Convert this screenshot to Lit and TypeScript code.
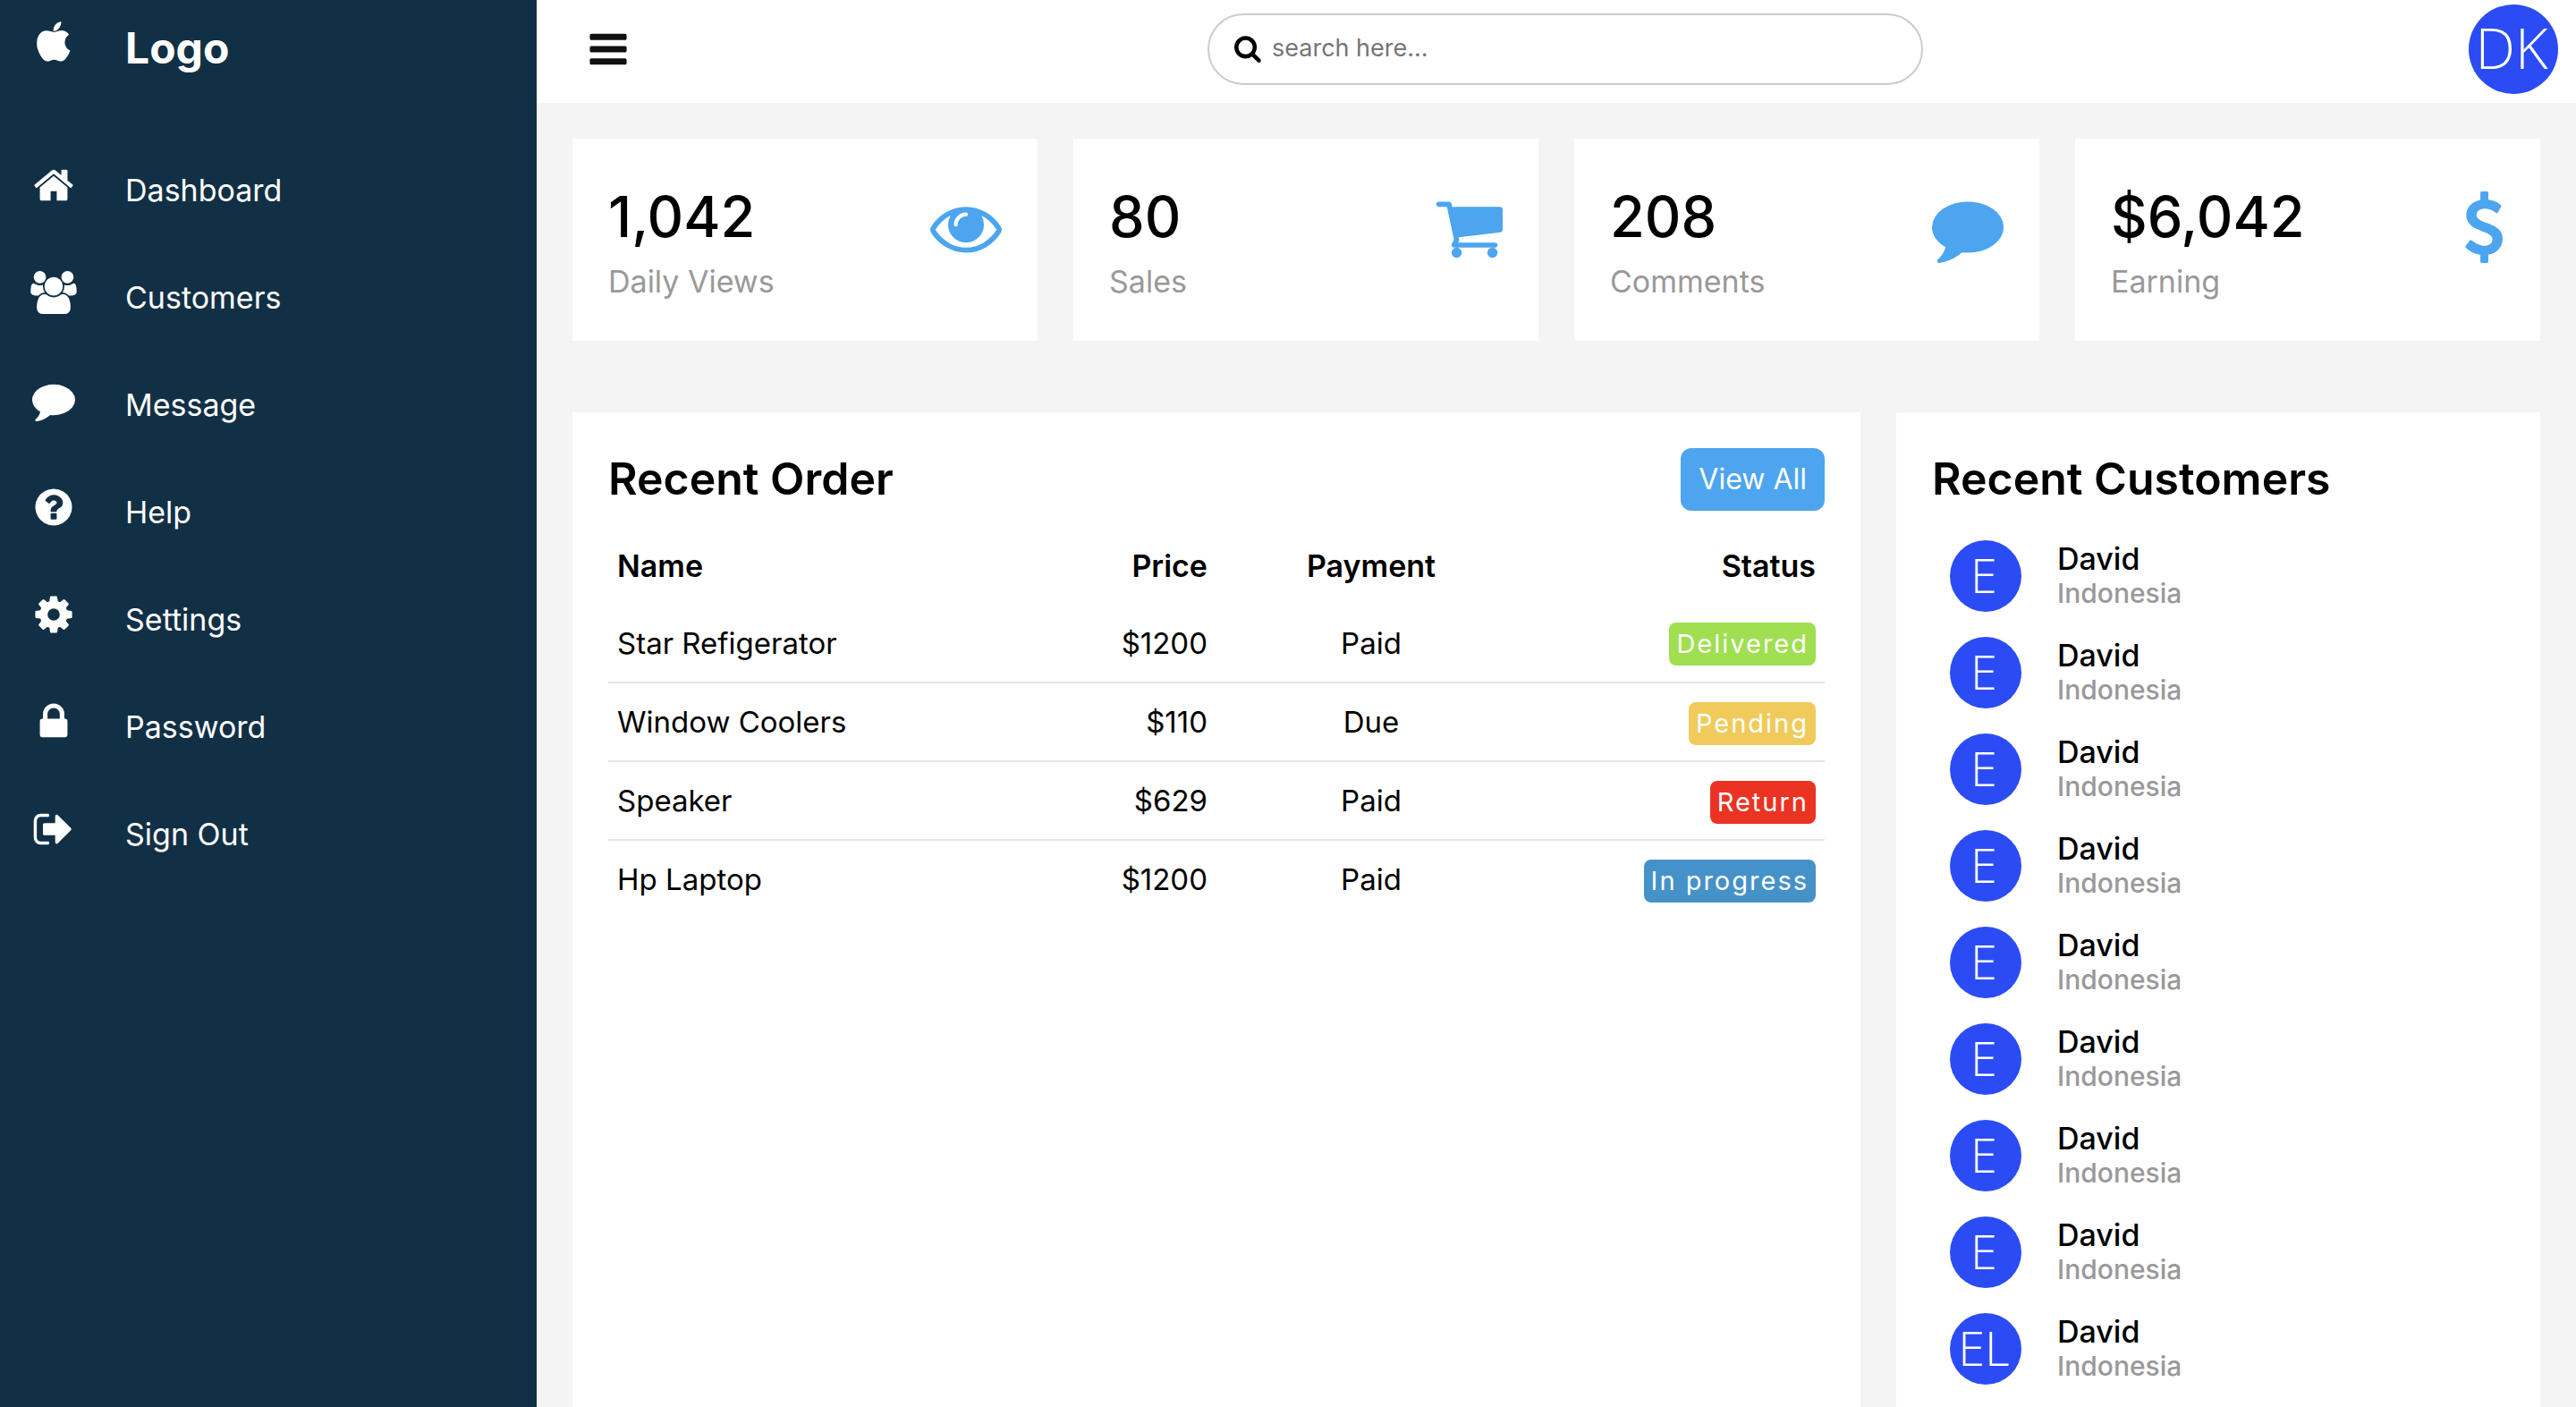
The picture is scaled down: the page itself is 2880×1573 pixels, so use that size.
import { LitElement, html, css } from "lit";
import { customElement, property } from "lit/decorators.js";

interface Glyph {
  box: string;
  d: string;
}

const GLYPHS: Record<string, Glyph> = {
  apple: {
    box: "0 0 1792 1792",
    d: "M1585 1215q-39 125-123 250-129 196-257 196-49 0-140-32-86-32-151-32-61 0-142 33-81 34-132 34-152 0-301-259-147-261-147-503 0-228 113-374 113-144 284-144 72 0 177 30 104 30 138 30 45 0 143-34 102-34 173-34 119 0 213 65 52 36 104 100-79 67-114 118-65 94-65 207 0 124 69 223t158 126zm-376-1173q0 61-29 136-30 75-93 138-54 54-108 72-37 11-104 17 3-149 78-257 74-107 250-148 1 3 2.5 11t2.5 11q0 4 .5 10t.5 10z",
  },
  home: {
    box: "0 0 1792 1792",
    d: "M1472 992v480q0 26-19 45t-45 19h-384v-384h-256v384h-384q-26 0-45-19t-19-45v-480q0-1 .5-3t.5-3l575-474 575 474q1 2 1 6zm223-69l-62 74q-8 9-21 11h-3q-13 0-21-7l-692-577-692 577q-12 8-24 7-13-2-21-11l-62-74q-8-10-7-23.5t11-21.5l719-599q32-26 76-26t76 26l244 204v-195q0-14 9-23t23-9h192q14 0 23 9t9 23v408l219 182q10 8 11 21.5t-7 23.5z",
  },
  users: {
    box: "0 0 1792 1792",
    d: "M529 896q-162 5-265 128h-134q-82 0-138-40.5t-56-118.5q0-353 124-353 6 0 43.5 21t97.5 42.5 119 21.5q67 0 133-23-5 37-5 66 0 139 81 256zm1071 637q0 120-73 189.5t-194 69.5h-874q-121 0-194-69.5t-73-189.5q0-53 3.5-103.5t14-109 26.5-108.5 43-97.5 62-81 85.5-53.5 111.5-20q10 0 43 21.5t73 48 107 48 135 21.5 135-21.5 107-48 73-48 43-21.5q61 0 111.5 20t85.5 53.5 62 81 43 97.5 26.5 108.5 14 109 3.5 103.5zm-1024-1277q0 106-75 181t-181 75-181-75-75-181 75-181 181-75 181 75 75 181zm704 384q0 159-112.5 271.5t-271.5 112.5-271.5-112.5-112.5-271.5 112.5-271.5 271.5-112.5 271.5 112.5 112.5 271.5zm576 225q0 78-56 118.5t-138 40.5h-134q-103-123-265-128 81-117 81-256 0-29-5-66 66 23 133 23 59 0 119-21.5t97.5-42.5 43.5-21q124 0 124 353zm-128-609q0 106-75 181t-181 75-181-75-75-181 75-181 181-75 181 75 75 181z",
  },
  comment: {
    box: "0 0 1792 1792",
    d: "M1792 896q0 174-120 321.5t-326 233-450 85.5q-70 0-145-8-198 175-460 242-49 14-114 22-17 2-30.5-9t-17.5-29v-1q-3-4-.5-12t2-10 4.5-9.5l6-9 7-8.5 8-9q7-8 31-34.5t34.5-38 31-39.5 32.5-51 27-59 26-76q-157-89-247.5-220t-90.5-281q0-130 71-248.5t191-204.5 286-136.5 348-50.5q244 0 450 85.5t326 233 120 321.5z",
  },
  help: {
    box: "0 0 1792 1792",
    d: "M1024 1376v-192q0-14-9-23t-23-9h-192q-14 0-23 9t-9 23v192q0 14 9 23t23 9h192q14 0 23-9t9-23zm256-672q0-88-55.5-163t-138.5-116-170-41q-243 0-371 213-15 24 8 42l132 100q7 6 19 6 16 0 25-12 53-68 86-92 34-24 86-24 48 0 85.5 26t37.5 59q0 38-20 61t-68 45q-63 28-115.5 86.5t-52.5 125.5v36q0 14 9 23t23 9h192q14 0 23-9t9-23q0-19 21.5-49.5t54.5-49.5q32-18 49-28.5t46-35 44.5-48 28-60.5 12.5-81zm384 192q0 209-103 385.5t-279.5 279.5-385.5 103-385.5-103-279.5-279.5-103-385.5 103-385.5 279.5-279.5 385.5-103 385.5 103 279.5 279.5 103 385.5z",
  },
  cog: {
    box: "0 0 1792 1792",
    d: "M1152 896q0-106-75-181t-181-75-181 75-75 181 75 181 181 75 181-75 75-181zm512-109v222q0 12-8 23t-20 13l-185 28q-19 54-39 91 35 50 107 138 10 12 10 25t-9 23q-27 37-99 108t-94 71q-12 0-26-9l-138-108q-44 23-91 38-16 136-29 186-7 28-36 28h-222q-14 0-24.5-8.5t-11.5-21.5l-28-184q-49-16-90-37l-141 107q-10 9-25 9-14 0-25-11-126-114-165-168-7-10-7-23 0-12 8-23 15-21 51-66.5t54-70.5q-27-50-41-99l-183-27q-13-2-21-12.5t-8-23.5v-222q0-12 8-23t19-13l186-28q14-46 39-92-40-57-107-138-10-12-10-24 0-10 9-23 26-36 98.5-107.5t94.5-71.5q13 0 26 10l138 107q44-23 91-38 16-136 29-186 7-28 36-28h222q14 0 24.5 8.5t11.5 21.5l28 184q49 16 90 37l142-107q9-9 24-9 13 0 25 10 129 119 165 170 7 8 7 22 0 12-8 23-15 21-51 66.5t-54 70.5q26 50 41 98l183 28q13 2 21 12.5t8 23.5z",
  },
  lock: {
    box: "0 0 1792 1792",
    d: "M640 768h512v-192q0-106-75-181t-181-75-181 75-75 181v192zm832 96v576q0 40-28 68t-68 28h-960q-40 0-68-28t-28-68v-576q0-40 28-68t68-28h32v-192q0-184 132-316t316-132 316 132 132 316v192h32q40 0 68 28t28 68z",
  },
  signout: {
    box: "0 0 1792 1792",
    d: "M704 1440q0 4 1 20t.5 26.5-3 23.5-10 19.5-20.5 6.5h-320q-119 0-203.5-84.5t-84.5-203.5v-704q0-119 84.5-203.5t203.5-84.5h320q13 0 22.5 9.5t9.5 22.5q0 4 1 20t.5 26.5-3 23.5-10 19.5-20.5 6.5h-320q-66 0-113 47t-47 113v704q0 66 47 113t113 47h312l11.5 1 11.5 3 8 5.5 7 9 2 13.5zm928-544q0 26-19 45l-544 544q-19 19-45 19t-45-19-19-45v-288h-448q-26 0-45-19t-19-45v-384q0-26 19-45t45-19h448v-288q0-26 19-45t45-19 45 19l544 544q19 19 19 45z",
  },
  bars: {
    box: "0 0 1792 1792",
    d: "M1664 1344v128q0 26-19 45t-45 19h-1408q-26 0-45-19t-19-45v-128q0-26 19-45t45-19h1408q26 0 45 19t19 45zm0-512v128q0 26-19 45t-45 19h-1408q-26 0-45-19t-19-45v-128q0-26 19-45t45-19h1408q26 0 45 19t19 45zm0-512v128q0 26-19 45t-45 19h-1408q-26 0-45-19t-19-45v-128q0-26 19-45t45-19h1408q26 0 45 19t19 45z",
  },
  search: {
    box: "64 0 1792 1792",
    d: "M1216 832q0-185-131.5-316.5t-316.5-131.5-316.5 131.5-131.5 316.5 131.5 316.5 316.5 131.5 316.5-131.5 131.5-316.5zm512 832q0 52-38 90t-90 38q-54 0-90-38l-343-342q-179 124-399 124-143 0-273.5-55.5t-225-150-150-225-55.5-273.5 55.5-273.5 150-225 225-150 273.5-55.5 273.5 55.5 225 150 150 225 55.5 273.5q0 220-124 399l343 343q37 37 37 90z",
  },
  eye: {
    box: "0 0 1792 1792",
    d: "M1664 960q-152-236-381-353 61 104 61 225 0 185-131.5 316.5t-316.5 131.5-316.5-131.5-131.5-316.5q0-121 61-225-229 117-381 353 133 205 333.5 326.5t434.5 121.5 434.5-121.5 333.5-326.5zm-720-384q0-20-14-34t-34-14q-125 0-214.5 89.5t-89.5 214.5q0 20 14 34t34 14 34-14 14-34q0-86 61-147t147-61q20 0 34-14t14-34zm848 384q0 34-20 69-140 230-376.5 368.5t-499.5 138.5-499.5-139-376.5-368q-20-35-20-69t20-69q140-229 376.5-368t499.5-139 499.5 139 376.5 368q20 35 20 69z",
  },
  cart: {
    box: "-64 0 1792 1792",
    d: "M704 1536q0 52-38 90t-90 38-90-38-38-90 38-90 90-38 90 38 38 90zm896 0q0 52-38 90t-90 38-90-38-38-90 38-90 90-38 90 38 38 90zm128-1088v512q0 24-16.5 42.5t-40.5 21.5l-1044 122q13 60 13 70 0 16-24 64h920q26 0 45 19t19 45-19 45-45 19h-1024q-26 0-45-19t-19-45q0-11 8-31.5t16-36 21.5-40 15.5-29.5l-177-823h-204q-26 0-45-19t-19-45 19-45 45-19h256q16 0 28.5 6.5t19.5 15.5 13 24.5 8 26 5.5 29.5 4.5 26h1201q26 0 45 19t19 45z",
  },
  dollar: {
    box: "-384 0 1792 1792",
    d: "M1362 1185q0 153-99.5 263.5t-258.5 136.5v175q0 14-9 23t-23 9h-135q-13 0-22.5-9.5t-9.5-22.5v-175q-66-9-127.5-31t-101.5-44.5-74-48-46.5-37.5-17.5-18q-17-21-2-41l103-135q7-10 23-12 15-2 24 9l2 2q113 99 243 125 37 8 74 8 81 0 142.5-43t61.5-122q0-28-15-53t-33.5-42-58.5-37.5-66-32-80-32.5q-39-16-61.5-25t-61.5-26.5-62.5-31-56.5-35.5-53.5-42.5-43.5-49-35.5-58-21-66.5-8.5-78q0-138 98-242t255-134v-180q0-13 9.5-22.5t22.5-9.5h135q14 0 23 9t9 23v176q57 6 110.5 23t87 33.5 63.5 37.5 39 29 15 14q17 18 5 38l-81 146q-8 15-23 16-14 3-27-7-3-3-14.5-12t-39-26.5-58.5-32-74.5-26-85.5-11.5q-95 0-155 43t-60 111q0 26 8.5 48t29.5 41.5 39.5 33 56 31 60.5 27 70 27.5q53 20 81 31.5t76 35 75.5 42.5 62 50 53 63.5 31.5 76.5 13 94z",
  },
};

@customElement("app-icon")
class AppIcon extends LitElement {
  @property() name = "";

  static styles = css`
    :host {
      display: block;
      flex: none;
      width: 48px;
      height: 48px;
    }
    .glyph {
      display: block;
      width: 100%;
      height: 100%;
      fill: currentColor;
      overflow: visible;
    }
  `;

  render() {
    const glyph = GLYPHS[this.name];
    return html`<svg class="glyph" viewBox=${glyph.box} aria-hidden="true"><path d=${glyph.d}></path></svg>`;
  }
}

const NAV = [
  { icon: "home", label: "Dashboard" },
  { icon: "users", label: "Customers" },
  { icon: "comment", label: "Message" },
  { icon: "help", label: "Help" },
  { icon: "cog", label: "Settings" },
  { icon: "lock", label: "Password" },
  { icon: "signout", label: "Sign Out" },
];

const STATS = [
  { value: "1,042", label: "Daily Views", icon: "eye" },
  { value: "80", label: "Sales", icon: "cart" },
  { value: "208", label: "Comments", icon: "comment" },
  { value: "$6,042", label: "Earning", icon: "dollar" },
];

const ORDERS = [
  { name: "Star Refigerator", price: "$1200", payment: "Paid", status: "Delivered", tone: "delivered" },
  { name: "Window Coolers", price: "$110", payment: "Due", status: "Pending", tone: "pending" },
  { name: "Speaker", price: "$629", payment: "Paid", status: "Return", tone: "return" },
  { name: "Hp Laptop", price: "$1200", payment: "Paid", status: "In progress", tone: "progress" },
];

const CUSTOMERS = ["E", "E", "E", "E", "E", "E", "E", "E", "EL"].map((initials) => ({
  initials,
  name: "David",
  country: "Indonesia",
}));

@customElement("app-root")
class AppRoot extends LitElement {
  static styles = css`
    :host {
      display: flex;
      height: 100vh;
      overflow: hidden;
      background: #f4f4f4;
      color: #000;
      font-family: Inter, "Open Sans", sans-serif;
      font-size: 32px;
    }
    * {
      box-sizing: border-box;
      margin: 0;
      padding: 0;
    }

    .sidebar {
      flex: none;
      width: 600px;
      background: #123045;
    }
    .nav {
      list-style: none;
    }
    .link {
      display: grid;
      grid-template-columns: 120px 1fr;
      column-gap: 20px;
      justify-items: center;
      height: 120px;
      color: #fff;
      font-size: 34px;
      line-height: 120px;
      text-decoration: none;
    }
    .link app-icon {
      margin-top: 30px;
    }
    .link-text {
      justify-self: start;
    }
    .brand {
      height: 110px;
      margin-bottom: 43px;
      font-size: 48px;
      font-weight: 700;
      line-height: 108px;
    }
    .brand app-icon {
      margin-top: 24px;
    }

    .main {
      flex: 1;
      min-width: 0;
      display: flex;
      flex-direction: column;
    }
    .topbar {
      flex: none;
      display: flex;
      align-items: center;
      justify-content: space-between;
      padding: 5px 20px 10px;
      background: #fff;
    }
    .toggle {
      display: flex;
      align-items: center;
      justify-content: center;
      width: 120px;
      height: 100px;
      border: 0;
      background: none;
      color: #111;
    }
    .search {
      display: flex;
      align-items: center;
      gap: 10px;
      width: 800px;
      height: 80px;
      padding: 0 28px 2px;
      border: 2px solid #ccc;
      border-radius: 40px;
    }
    .search app-icon {
      width: 32px;
      height: 32px;
    }
    .search-input {
      flex: 1;
      min-width: 0;
      border: 0;
      outline: 0;
      background: none;
      font: inherit;
      font-size: 27px;
      line-height: 40px;
    }
    .search-input::placeholder {
      color: #757575;
    }

    .avatar {
      flex: none;
      display: flex;
      align-items: center;
      justify-content: center;
      width: 80px;
      height: 80px;
      padding: 0 4px 4px 0;
      border-radius: 50%;
      background: #2b4cf5;
      color: #fff;
      font-family: "Open Sans", "Noto Sans", sans-serif;
      font-size: 54px;
      font-weight: 300;
      line-height: 76px;
    }
    .avatar-user {
      width: 100px;
      height: 100px;
      font-size: 63px;
      line-height: 96px;
    }

    .stats {
      flex: none;
      display: grid;
      grid-template-columns: repeat(4, 1fr);
      gap: 40px;
      padding: 40px;
    }
    .stat {
      display: flex;
      justify-content: space-between;
      padding: 40px;
      background: #fff;
    }
    .stat-value {
      font-size: 63px;
      font-weight: 500;
      line-height: 94px;
    }
    .stat-label {
      color: #999;
      font-size: 34px;
      line-height: 52px;
    }
    .stat app-icon {
      width: 80px;
      height: 80px;
      margin-top: 19px;
      color: #4ca5ee;
    }

    .details {
      flex: 1;
      min-height: 0;
      display: grid;
      grid-template-columns: 2fr 1fr;
      gap: 40px;
      padding: 40px 40px 0;
    }
    .panel {
      min-width: 0;
      padding: 40px;
      background: #fff;
    }
    .panel-head {
      display: flex;
      align-items: center;
      justify-content: space-between;
      height: 70px;
      margin-bottom: 19px;
    }
    .panel-title {
      font-size: 50px;
      font-weight: 600;
      line-height: 70px;
      padding-bottom: 2px;
    }
    .view-all {
      padding: 0 20px;
      border-radius: 12px;
      background: #4ca5ee;
      color: #fff;
      font-size: 32px;
      line-height: 70px;
      text-decoration: none;
    }

    .orders {
      width: 100%;
      table-layout: fixed;
      border-collapse: collapse;
      line-height: 48px;
    }
    .orders th,
    .orders td {
      padding: 0 10px;
      font-size: 33px;
      vertical-align: middle;
    }
    .orders th {
      height: 85px;
      font-size: 34px;
      font-weight: 600;
    }
    .orders td {
      height: 88px;
      border-bottom: 2px solid #e5e5e5;
    }
    .orders tr:last-child td {
      border-bottom-color: transparent;
    }
    .orders .name {
      width: 28%;
      text-align: left;
    }
    .orders .price {
      width: 22%;
      text-align: right;
    }
    .orders .payment {
      width: 346px;
      text-align: center;
    }
    .orders .status {
      text-align: right;
    }
    .badge {
      display: inline-block;
      padding: 0 8px;
      border-radius: 8px;
      color: #fff;
      font-size: 29px;
      line-height: 48px;
      letter-spacing: 2px;
      vertical-align: middle;
    }
    .delivered {
      background: #9fdf50;
    }
    .pending {
      background: #f0cb5b;
    }
    .return {
      background: #ea3323;
    }
    .progress {
      background: #4592c9;
    }

    .customers {
      list-style: none;
    }
    .customer {
      display: flex;
      align-items: center;
      gap: 40px;
      height: 108px;
      padding-left: 20px;
      font-weight: 500;
      line-height: 38px;
    }
    .customer-name {
      font-size: 34px;
    }
    .customer-country {
      color: #999;
      font-size: 30px;
    }
  `;

  render() {
    return html`
      <nav class="sidebar">
        <a class="link brand" href="#">
          <app-icon name="apple"></app-icon>
          <span class="link-text">Logo</span>
        </a>
        <ul class="nav">
          ${NAV.map(
            (item) => html`
              <li>
                <a class="link" href="#">
                  <app-icon name=${item.icon}></app-icon>
                  <span class="link-text">${item.label}</span>
                </a>
              </li>
            `,
          )}
        </ul>
      </nav>
      <main class="main">
        <header class="topbar">
          <button class="toggle" type="button" aria-label="Toggle menu">
            <app-icon name="bars"></app-icon>
          </button>
          <label class="search">
            <app-icon name="search"></app-icon>
            <input class="search-input" type="text" placeholder="search here..." aria-label="Search" />
          </label>
          <div class="avatar avatar-user">DK</div>
        </header>
        <section class="stats">
          ${STATS.map(
            (stat) => html`
              <div class="stat">
                <div>
                  <div class="stat-value">${stat.value}</div>
                  <div class="stat-label">${stat.label}</div>
                </div>
                <app-icon name=${stat.icon}></app-icon>
              </div>
            `,
          )}
        </section>
        <div class="details">
          <section class="panel">
            <div class="panel-head">
              <h2 class="panel-title">Recent Order</h2>
              <a class="view-all" href="#">View All</a>
            </div>
            <table class="orders">
              <thead>
                <tr>
                  <th class="name">Name</th>
                  <th class="price">Price</th>
                  <th class="payment">Payment</th>
                  <th class="status">Status</th>
                </tr>
              </thead>
              <tbody>
                ${ORDERS.map(
                  (order) => html`
                    <tr>
                      <td class="name">${order.name}</td>
                      <td class="price">${order.price}</td>
                      <td class="payment">${order.payment}</td>
                      <td class="status"><span class="badge ${order.tone}">${order.status}</span></td>
                    </tr>
                  `,
                )}
              </tbody>
            </table>
          </section>
          <section class="panel">
            <div class="panel-head">
              <h2 class="panel-title">Recent Customers</h2>
            </div>
            <ul class="customers">
              ${CUSTOMERS.map(
                (customer) => html`
                  <li class="customer">
                    <div class="avatar">${customer.initials}</div>
                    <div>
                      <div class="customer-name">${customer.name}</div>
                      <div class="customer-country">${customer.country}</div>
                    </div>
                  </li>
                `,
              )}
            </ul>
          </section>
        </div>
      </main>
    `;
  }
}
